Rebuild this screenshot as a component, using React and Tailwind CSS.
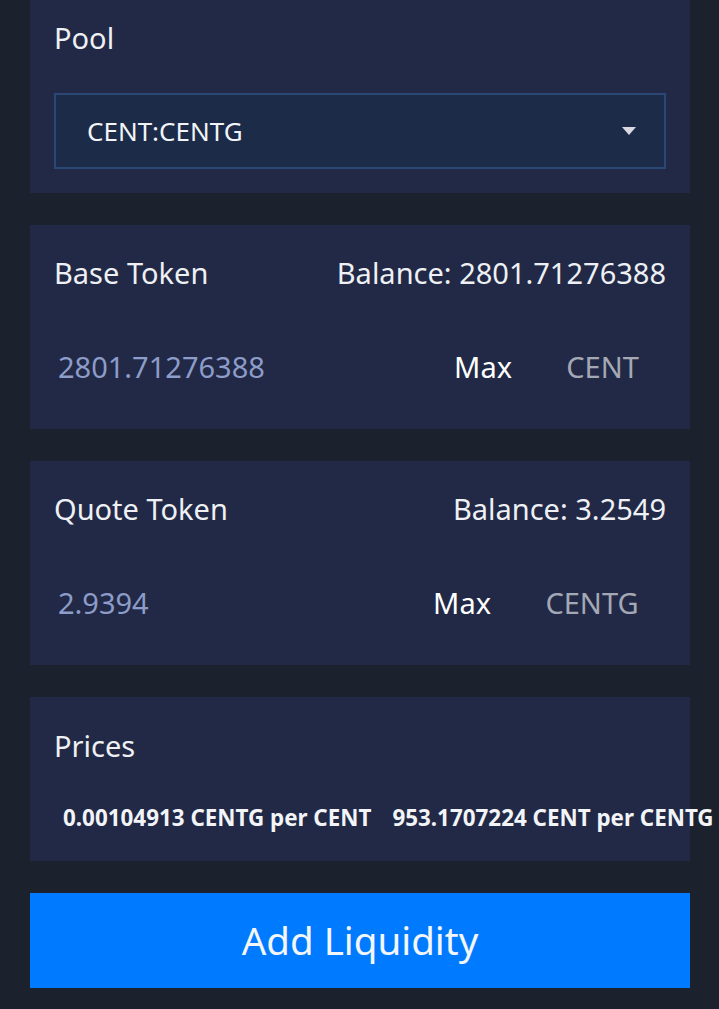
import React from "react";

const font = { fontFamily: '"Noto Sans", "Open Sans", sans-serif' };

function TokenCard({ label, balance, value, symbol, symbolW }) {
  return (
    <div className="bg-[#212946] px-6 pt-[28px] pb-[42px]">
      <div className="flex items-center justify-between text-[29px] leading-[40px] text-[#eef0f4]">
        <span>{label}</span>
        <span>Balance: {balance}</span>
      </div>
      <div className="mt-[54px] flex items-center text-[29px] leading-[40px]">
        <span className="flex-1 pl-1 text-[#8d9cc8]">{value}</span>
        <span className="mr-[27px] text-white">Max</span>
        <span className={`${symbolW} text-center text-[#a4a8b4]`}>{symbol}</span>
      </div>
    </div>
  );
}

export default function App() {
  return (
    <div className="min-h-[1009px] bg-[#1b212d]" style={font}>
      <div className="ml-[30px] flex w-[660px] flex-col gap-[32px]">
        <div className="bg-[#212946] px-6 pt-[18px] pb-[24px]">
          <div className="text-[29px] leading-[40px] text-[#eef0f4]">Pool</div>
          <div className="mt-[35px] flex h-[76px] items-center justify-between border-2 border-[#2b4874] bg-[#1c2b47] pl-[31px] pr-[28px]">
            <span className="text-[26px] text-[#f2f4f8]">CENT:CENTG</span>
            <svg width="14" height="9" viewBox="0 0 14 9">
              <path d="M0 0 H14 L7 8 Z" fill="#d8dae0" />
            </svg>
          </div>
        </div>

        <TokenCard label="Base Token" balance="2801.71276388" value="2801.71276388" symbol="CENT" symbolW="w-[127px]" />
        <TokenCard label="Quote Token" balance="3.2549" value="2.9394" symbol="CENTG" symbolW="w-[148px]" />

        <div className="bg-[#212946] pl-6 pt-[29px] pb-[28px]">
          <div className="text-[29px] leading-[40px] text-[#eef0f4]">Prices</div>
          <div className="mt-[37px] flex gap-[21px] whitespace-nowrap pl-[9px] text-[22.4px] font-bold leading-[30px] text-[#f2f4f8]">
            <span>0.00104913 CENTG per CENT</span>
            <span>953.1707224 CENT per CENTG</span>
          </div>
        </div>

        <button className="flex h-[95px] items-center justify-center bg-[#007bff] text-[38.5px] text-[#f4f6fa]">
          Add Liquidity
        </button>
      </div>
    </div>
  );
}
